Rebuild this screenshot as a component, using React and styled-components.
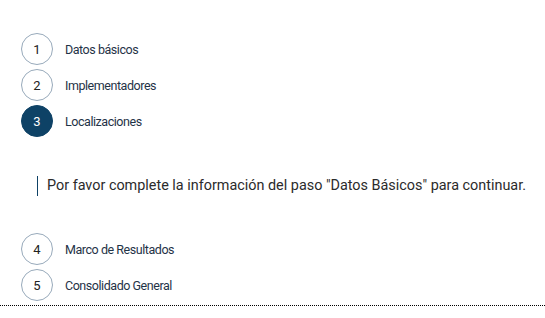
import React from 'react'
import styled, { createGlobalStyle } from 'styled-components'

const GlobalStyle = createGlobalStyle`
    html, body {
        margin: 0;
        padding: 0;
        background: #fff;
    }
    body {
        font-family: Roboto, "Liberation Sans", sans-serif;
        color: #1f2d3a;
    }
`

const Stepper = styled.div`
    display: flex;
    flex-direction: column;
    padding: 33px 0 0 21px;
`

const StepList = styled.div`
    display: flex;
    flex-direction: column;
    gap: 4px;
`

const Step = styled.div`
    display: flex;
    align-items: center;
    height: 32px;
`

const Circle = styled.div`
    width: 32px;
    height: 32px;
    box-sizing: border-box;
    border-radius: 50%;
    display: flex;
    align-items: center;
    justify-content: center;
    font-size: 13px;
    border: 1px solid ${props => props.active ? '#0e4266' : '#98aabb'};
    background: ${props => props.active ? '#0e4266' : '#fff'};
    color: ${props => props.active ? '#fff' : '#222'};
    flex-shrink: 0;
`

const Label = styled.span`
    margin-left: 12px;
    font-size: 12.5px;
    letter-spacing: -0.45px;
    color: #1f3347;
`

const Content = styled.div`
    margin: 39px 0 37px 16px;
    padding-left: 9px;
    border-left: 1px solid #0e4266;
    font-size: 14.4px;
    line-height: 20px;
    color: #2b2b2b;
`

const Divider = styled.div`
    margin: 4px 0 0 -21px;
    border-bottom: 1px dotted #000;
`

const stepsBefore = [
    { n: 1, label: 'Datos básicos' },
    { n: 2, label: 'Implementadores' },
    { n: 3, label: 'Localizaciones', active: true },
]

const stepsAfter = [
    { n: 4, label: 'Marco de Resultados' },
    { n: 5, label: 'Consolidado General' },
]

const renderSteps = steps => steps.map(step => (
    <Step key={step.n}>
        <Circle active={step.active}>{step.n}</Circle>
        <Label>{step.label}</Label>
    </Step>
))

export default function App() {
    return (
        <>
            <GlobalStyle />
            <Stepper>
                <StepList>{renderSteps(stepsBefore)}</StepList>
                <Content>
                    Por favor complete la información del paso "Datos Básicos" para continuar.
                </Content>
                <StepList>{renderSteps(stepsAfter)}</StepList>
                <Divider />
            </Stepper>
        </>
    )
}
